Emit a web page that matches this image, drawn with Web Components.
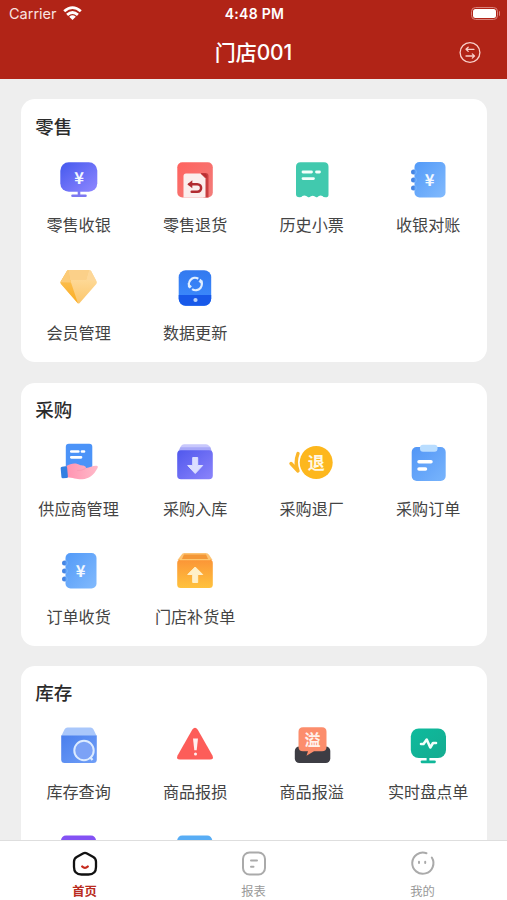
<!DOCTYPE html>
<html lang="zh-CN">
<head>
<meta charset="utf-8">
<title>门店001</title>
<style>
html,body{margin:0;height:100%}
body{background:#eee;font-family:Inter,"Noto Sans CJK SC",sans-serif;overflow:hidden}
</style>
</head>
<body>
<shop-app></shop-app>
<script>
const yen = (x, y) => `<text x="${x}" y="${y}" text-anchor="middle" font-size="16.500" font-weight="700" font-family="Noto Sans CJK SC" fill="#f2f8ff">¥</text>`;
const ledger = `<defs><linearGradient id="g" x1="0" y1="0" x2="1" y2="1"><stop stop-color="#529af8"/><stop offset="1" stop-color="#82bafd"/></linearGradient></defs>
<g fill="#4685e3"><circle cx="5.5" cy="12" r="2.5"/><circle cx="5.5" cy="20" r="2.5"/><circle cx="5.5" cy="28" r="2.5"/></g>
<rect x="6.500" y="2" width="31" height="35.500" rx="5" fill="url(#g)"/>
<path d="M7.500 9.500q2 2.500 0 5M7.500 17.500q2 2.500 0 5M7.500 25.500q2 2.500 0 5" stroke="#75b2fb" fill="none"/>${yen(21.5, 26)}`;

const ICONS = {
cashier: `<defs><linearGradient id="g" x1="0" y1="0" x2="1" y2="1"><stop stop-color="#4459ee"/><stop offset="1" stop-color="#9087ff"/></linearGradient></defs>
<path d="M20 31v4M13.500 35.800h13" stroke="#7d78f2" stroke-width="2.600" stroke-linecap="round"/><rect x="1.300" y="2.300" width="37" height="29.500" rx="8.500" fill="url(#g)"/>${yen(20.2, 24)}`,
refund: `<defs><linearGradient id="g" x1="0" y1="0" x2="1" y2="1"><stop stop-color="#ff625e"/><stop offset="1" stop-color="#f27d7b"/></linearGradient></defs>
<rect x="2.300" y="2.200" width="35.500" height="35.300" rx="5" fill="url(#g)"/><path d="M26 13h4.500q3 0 3 3v21.500h-5z" fill="#c93f40"/>
<path d="M8.500 37.500V16q0-2.500 2.500-2.500h14.500l5 5v19z" fill="#fbeeed"/><path d="M25.500 13.500h5q1.500.8 1.500 4.500z" fill="#b92f32"/>
<path d="M14.500 24.300h7.700c5.200 0 5.200 7.400 0 7.400h-5.500" fill="none" stroke="#b12b30" stroke-width="2.500" stroke-linecap="round"/><path d="M12.300 24.300l5-4v8z" fill="#b12b30"/>`,
receipt: `<path d="M8.500 2.200h23.500q4.500 0 4.500 4.500v28q0 2.600-3 2.600-2.500 0-3-1.300-2.800-1.500-5.300 1.300h-1q-3.500-3-7 0h-1q-3-2.800-5.800-1.300-.5 1.300-3 1.300-3.400 0-3.400-3V6.700q0-4.500 4.500-4.500z" fill="#41c9ae"/>
<path d="M11 12h8.500M24.500 12h3M11 18.600h10.500" stroke="#f3fffb" stroke-width="2.800" stroke-linecap="round"/>`,
ledger,
gem: `<defs><linearGradient id="a" x1="0" y1="0" x2="0" y2="1"><stop stop-color="#fac564"/><stop offset="1" stop-color="#fcad20"/></linearGradient><linearGradient id="b" x1="0" y1="0" x2="0" y2="1"><stop stop-color="#ffe0a7"/><stop offset="1" stop-color="#fbc66b"/></linearGradient></defs>
<path d="M9.500 2h21q1 0 1.600 1l5.500 10.500q.7 1.300-.3 2.400L20.700 35q-1.100 1.200-2.200 0L2 15.900q-1-1.100-.3-2.400L7.900 3q.6-1 1.600-1z" fill="url(#b)"/>
<path d="M9.500 2L12 14.500 19 35.500 2 15.900q-1-1.100-.3-2.400L7.900 3q.6-1 1.600-1z" fill="url(#a)"/><path d="M9.500 2h21L27.500 12H11z" fill="#fbd089"/><path d="M9.500 2L11 11l1 3.500-10.500-.3L7.900 3z" fill="#fccb77"/><path d="M30.500 2l1.600 1 5.500 10.500-10-1.500z" fill="#fdd798"/>`,
sync: `<defs><linearGradient id="g" x1="0" y1="0" x2="0" y2="1"><stop stop-color="#3379ef"/><stop offset="1" stop-color="#3d8dff"/></linearGradient></defs>
<rect x="3.700" y="2.200" width="32.500" height="35.500" rx="7" fill="url(#g)"/><path d="M3.700 27h32.500v3.700a7 7 0 0 1-7 7H10.700a7 7 0 0 1-7-7z" fill="#1859e9"/>
<circle cx="20.500" cy="32" r="2.100" fill="#b9d2fb"/><g fill="none" stroke="#e1efff" stroke-width="2.200"><path d="M15.300 19.900a6.200 6.200 0 0 1 8-9.200"/><path d="M24.900 11.500a6.200 6.200 0 0 1-7.800 9.600"/></g><path d="M27.800 16.800l-4.500-3.300 4.200-1.200zM12.700 15l4.500 3.500-4.200 1z" fill="#e1efff"/>`,
supplier: `<defs><linearGradient id="g"><stop stop-color="#ff93b1"/><stop offset="1" stop-color="#ffbac9"/></linearGradient></defs>
<rect x="6.800" y=".8" width="26.500" height="28" rx="3" fill="#4b93f8"/><path d="M12.300 8.500h7M23 8.500h2M12.300 14.300h9.700" stroke="#fff" stroke-width="2.700" stroke-linecap="round"/>
<path d="M7.500 23c4-2.500 9-4 14-.8 2 .3 5.500.3 5.500 2.800 4-.6 6.500-2.500 10.500-2.300 1.700.1 1.600 1.500.8 2.800-3.500 6.500-8.500 10.500-15 10.700-5.500.2-9-1.500-15.500-2z" fill="url(#g)"/><path d="M18 27.500q5 .3 8.500-2" stroke="#fa9ab3" fill="none"/><rect x="2" y="23.500" width="6.500" height="11.700" rx="1.500" transform="rotate(-5 5 29)" fill="#327fe2"/>`,
inbound: `<defs><linearGradient id="g" x1="0" y1="0" x2="1" y2="1"><stop stop-color="#5058ed"/><stop offset="1" stop-color="#8b84fb"/></linearGradient></defs>
<path d="M9 1.200h22q2 0 3.500 2L37 8.500H3L6 3q1-1.800 3-1.800z" fill="#c8c8fc"/><path d="M5.500 4.300h30L37 10H3z" fill="#a8a9f8"/><rect x="2.200" y="7.200" width="35.600" height="29" rx="3.800" fill="url(#g)"/><path d="M17.700 14.500h5v8h5L20.200 30.500l-7.500-8h5z" fill="#dbdfff" stroke="#dbdfff" stroke-linejoin="round"/>`,
factory: `<circle cx="24.200" cy="19.500" r="16.500" fill="#fdb71d"/><path d="M6 10.500Q2.500 19.500 6 28L-1 20.500" fill="none" stroke="#fbb62a" stroke-width="3.400" stroke-linecap="round" stroke-linejoin="round"/><path d="M5.500 11Q3 19.500 6 28L2.500 23z" fill="#fbb62a"/><text x="24.200" y="26" text-anchor="middle" font-size="17" font-weight="700" font-family="Noto Sans CJK SC" fill="#fff8e5">退</text>`,
order: `<defs><linearGradient id="g" x1="0" y1="0" x2="1" y2="1"><stop stop-color="#5296f6"/><stop offset="1" stop-color="#78b4fc"/></linearGradient></defs>
<rect x="3.700" y="4" width="34" height="34" rx="5" fill="url(#g)"/><rect x="12" y="1.800" width="17.500" height="7" rx="3" fill="#b9ddff"/><path d="M11 18.800h12M11 26h6.500" stroke="#fff" stroke-width="3.500" stroke-linecap="round"/>`,
restock: `<defs><linearGradient id="g" x1="0" y1="0" x2="0" y2="1"><stop stop-color="#fb9537"/><stop offset="1" stop-color="#ffc23d"/></linearGradient></defs>
<path d="M9.500 2h21q2.500 0 3.700 2L37.500 9h-35L6.300 4Q7.200 2 9.500 2z" fill="#fdc372"/><path d="M9 3.500h22L33.500 9h-27z" fill="#f39736"/><rect x="2.200" y="8.500" width="35.600" height="28.500" rx="3.500" fill="url(#g)"/><path d="M5 8.700h30" stroke="#ffd27a"/><path d="M17.700 31.500v-8h-5L20.200 16l7.500 7.500h-5v8z" fill="#fff0c9" stroke="#fff0c9" stroke-linejoin="round"/>`,
search: `<defs><linearGradient id="g" x1="0" y1="0" x2="1" y2="1"><stop stop-color="#4a7fed"/><stop offset="1" stop-color="#709ff7"/></linearGradient></defs>
<path d="M8.500 1.500h23q2 0 3 2l3.200 6.500H2.300L5.500 3.500q1-2 3-2z" fill="#a9c7fb"/><path d="M2.200 9.500h35.600v24q0 3.500-3.500 3.500H5.700q-3.500 0-3.500-3.500z" fill="url(#g)"/><circle cx="25" cy="24.500" r="9.700" fill="#7ca2f6" stroke="#dcebff" stroke-width="2"/><path d="M31 31l2.500 3" stroke="#dcebff" stroke-width="2.300"/>`,
damage: `<path d="M17.200 3.800q2.800-4 5.600 0l14.500 25.500q2.200 4.300-2.300 4.300H5q-4.500 0-2.300-4.300z" fill="#fd5d59"/><path d="M18 12.500h5l-1.300 11.700h-2.400z" fill="#fff0ef"/><circle cx="20.500" cy="28" r="1.500" fill="#fff0ef"/>`,
overflow: `<rect x="2.800" y="20.500" width="35.500" height="16.500" rx="4.500" fill="#3d3d44"/><path d="M11 1.300h19q4.500 0 4.500 4.500v15q0 4.500-4.500 4.500h-8l-7.500 4.500 1.500-4.500h-5q-4.500 0-4.500-4.500v-15q0-4.500 4.500-4.500z" fill="#fc8d6c"/><text x="20.500" y="19.500" text-anchor="middle" font-size="16" font-weight="700" font-family="Noto Sans CJK SC" fill="#fff2ec">溢</text>`,
realtime: `<defs><linearGradient id="g" x1="0" y1="0" x2="1" y2="1"><stop stop-color="#0dbb9d"/><stop offset="1" stop-color="#15ab90"/></linearGradient></defs><path d="M20 31v4M14 35.800h12.500" stroke="#10b799" stroke-width="2.800" stroke-linecap="round"/><rect x="2.800" y="2.500" width="35.200" height="29.500" rx="8" fill="url(#g)"/><path d="M13 18h2.500l3.200-4.500 3.600 8L25 17h3" fill="none" stroke="#f2fffb" stroke-width="2.600" stroke-linecap="round" stroke-linejoin="round"/>`,
violet: `<rect x="2" y="1.500" width="35" height="35" rx="5" fill="#8452f4"/>`,
sky: `<rect x="2.200" y="1.500" width="35" height="35" rx="5" fill="#58adf5"/>`,
wifi: `<g fill="none" stroke="#fff" stroke-width="2.800"><path d="M1.200 5.200Q9.500-2 17.800 5.200M4.100 8.900Q9.500 4 14.900 8.900"/></g><path d="M6.200 10.700Q9.500 8 12.800 10.700L9.500 14z" fill="#fff"/>`,
swap: `<g fill="none" stroke="#f9cfca" stroke-width="1.300" stroke-linecap="round" stroke-linejoin="round"><circle cx="11" cy="10.500" r="9.900"/><path d="M15 7.300H7L9.200 5.200M7 7.300L9.200 9.400M7 14h8.500L13.300 11.900M15.500 14L13.300 16.100"/></g>`,
home: `<path d="M11 2.400q2-1.100 4 0l6.300 3.700q2.700 1.600 2.700 4.700V16q0 7.500-7.500 7.500h-7Q2 23.500 2 16v-5.200q0-3.100 2.700-4.700z" fill="none" stroke="#111" stroke-width="2.300"/><path d="M10.200 15.500q2.800 2.800 5.600 0" fill="none" stroke="#c5281c" stroke-width="2.300" stroke-linecap="round"/>`,
report: `<g fill="none" stroke="#aaa" stroke-width="2" stroke-linecap="round"><rect x="2" y="1.500" width="22" height="22" rx="6.500"/><path d="M10 9.500h6M10 15.800h2.500"/></g>`,
me: `<g fill="none" stroke="#aaa" stroke-width="2" stroke-linecap="round"><path d="M16.500 2.200A10.600 10.600 0 1 0 21.800 6.500M9 10.700v1.400M15.200 10.700v1.400"/></g>`
};

function define(name, render) {
  customElements.define(name, class extends HTMLElement {
    connectedCallback() {
      if (this.shadowRoot) return;
      this.attachShadow({ mode: 'open' }).innerHTML = render(this);
    }
  });
}

define('line-icon', el => {
  const box = el.getAttribute('box') || '40 40';
  const [w, h] = box.split(' ');
  return `<style>:host{display:block;width:${w}px;height:${h}px;flex:none}svg{display:block;overflow:visible}</style>
  <svg width="${w}" height="${h}" viewBox="0 0 ${box}">${ICONS[el.getAttribute('name')]}</svg>`;
});

define('status-bar', () => `<style>
:host{display:grid;grid-template-columns:1fr auto 1fr;align-items:center;height:27px;padding:0 7px 0 9px;color:#fff;font-size:14.500px;box-sizing:border-box}
.l{display:flex;align-items:center;gap:6px;color:#f9e3e0}
.l line-icon{margin-bottom:2px}
.t{font-weight:600;font-size:14px;letter-spacing:.3px}
.b{justify-self:end;display:flex;align-items:center;gap:1px}
.body{width:23px;height:9.500px;border:1.500px solid #d9827b;border-radius:4.500px;padding:1px;background:#fff;background-clip:content-box}
.tip{width:1.500px;height:5px;background:#d9827b;border-radius:0 2px 2px 0}
</style><div class="l"><span>Carrier</span><line-icon name="wifi" box="19 14"></line-icon></div><div class="t">4:48 PM</div><div class="b"><div class="body"></div><div class="tip"></div></div>`);

define('nav-bar', () => `<style>
:host{display:grid;grid-template-columns:1fr auto 1fr;align-items:center;height:52px;padding:0 26px;box-sizing:border-box;color:#fff}
h1{grid-column:2;margin:0;font-size:21px;font-weight:500;line-height:50px;letter-spacing:-.1px}
line-icon{justify-self:end}
</style><h1><slot></slot></h1><line-icon name="swap" box="22 22"></line-icon>`);

define('menu-item', el => `<style>
:host{display:flex;flex-direction:column;align-items:center;gap:13.500px;height:77px;color:#444}
span{font-size:16.100px;line-height:24px;white-space:nowrap}
</style><line-icon name="${el.getAttribute('icon')}"></line-icon><span><slot></slot></span>`);

define('menu-card', el => `<style>
:host{display:block;background:#fff;border-radius:14px;height:263px;box-sizing:border-box;flex:none}
h2{margin:0;padding:13.500px 14px 19px;font-size:18.500px;line-height:28px;font-weight:500;color:#2b2b2b}
div{display:grid;grid-template-columns:repeat(4,1fr);row-gap:31px;margin-left:-1px}
</style><h2>${el.getAttribute('heading')}</h2><div><slot></slot></div>`);

define('tab-item', el => `<style>
:host{display:flex;flex:1;flex-direction:column;align-items:center;padding-top:10px;gap:4px;color:#999;font-size:12.300px;line-height:22px}
:host([active]){color:#b92b20;font-weight:700}
</style><line-icon name="${el.getAttribute('icon')}" box="26 26"></line-icon><span><slot></slot></span>`);

define('tab-bar', () => `<style>:host{display:flex;height:60px;box-sizing:border-box;background:#fff;border-top:1px solid #dedede;flex:none}</style><slot></slot>`);

define('shop-app', () => `<style>
:host{display:flex;flex-direction:column;height:100vh;width:100%;overflow:hidden}
header{background:#b12417;flex:none;height:79px}
main{flex:1;min-height:0;overflow:hidden;display:flex;flex-direction:column;gap:20.300px;padding:20.400px 20.500px 0 21.300px}
</style>
<header><status-bar></status-bar><nav-bar>门店001</nav-bar></header>
<main>
<menu-card heading="零售"><menu-item icon="cashier">零售收银</menu-item><menu-item icon="refund">零售退货</menu-item><menu-item icon="receipt">历史小票</menu-item><menu-item icon="ledger">收银对账</menu-item><menu-item icon="gem">会员管理</menu-item><menu-item icon="sync">数据更新</menu-item></menu-card>
<menu-card heading="采购"><menu-item icon="supplier">供应商管理</menu-item><menu-item icon="inbound">采购入库</menu-item><menu-item icon="factory">采购退厂</menu-item><menu-item icon="order">采购订单</menu-item><menu-item icon="ledger">订单收货</menu-item><menu-item icon="restock">门店补货单</menu-item></menu-card>
<menu-card heading="库存"><menu-item icon="search">库存查询</menu-item><menu-item icon="damage">商品报损</menu-item><menu-item icon="overflow">商品报溢</menu-item><menu-item icon="realtime">实时盘点单</menu-item><menu-item icon="violet"></menu-item><menu-item icon="sky"></menu-item></menu-card>
</main>
<tab-bar><tab-item icon="home" active>首页</tab-item><tab-item icon="report">报表</tab-item><tab-item icon="me">我的</tab-item></tab-bar>`);
</script>
</body>
</html>
